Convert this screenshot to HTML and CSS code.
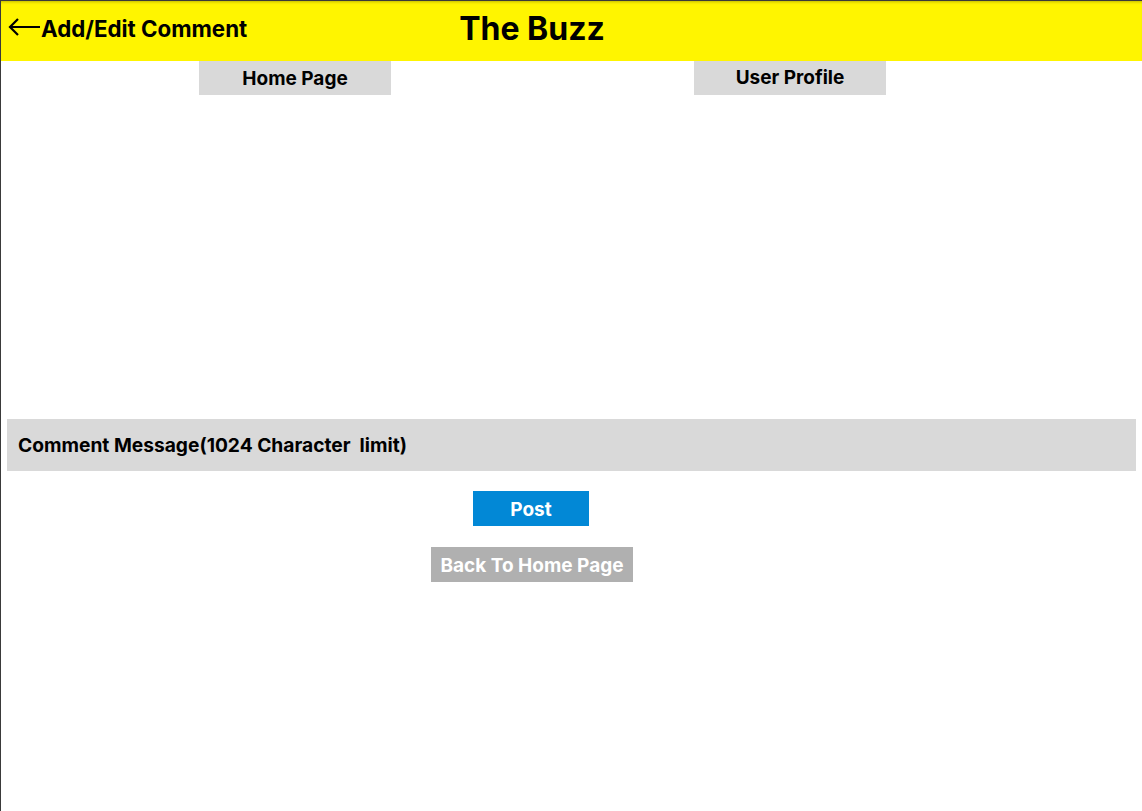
FILE: index.html
```html
<!DOCTYPE html>
<html>
<head>
<meta charset="utf-8">
<link rel="stylesheet" href="styles.css">
</head>
<body>
<div class="frame">
  <header class="topbar">
    <div class="back">
      <svg class="arrow" width="32" height="20" viewBox="0 0 32 20"><path d="M32 10H2M10 2L2 10L10 18" fill="none" stroke="#000" stroke-width="2.2"/></svg>
      <span class="page-title">Add/Edit Comment</span>
    </div>
    <h1 class="brand">The Buzz</h1>
  </header>
  <nav class="nav">
    <a class="nav-btn home">Home Page</a>
    <a class="nav-btn profile">User Profile</a>
  </nav>
  <div class="comment-field">Comment Message(1024 Character&nbsp; limit)</div>
  <div class="actions">
    <button class="btn post">Post</button>
    <button class="btn back-home">Back To Home Page</button>
  </div>
</div>
</body>
</html>
```
FILE: styles.css
```css
html, body { margin: 0; padding: 0; background: #fff; }
body { font-family: Inter, "Noto Sans", sans-serif; }
.frame {
  width: 1141px;
  height: 810px;
  border-left: 1px solid #3a3a3a;
  border-top: 1px solid #3a3a3a;
}
.topbar {
  height: 60px;
  box-sizing: border-box;
  background: #fff500;
  display: flex;
  align-items: center;
  padding: 0 0 6px 7px;
  box-shadow: inset 0 3px 3px -2px rgba(0,0,0,0.25);
}
.back { display: flex; align-items: center; }
.arrow { display: block; margin-top: -2px; }
.page-title { font-size: 22.3px; font-weight: 700; color: #000; margin-left: 1px; }
.brand { margin: 0 0 0 212px; font-size: 32px; font-weight: 700; color: #000; }
.nav { display: flex; padding-left: 198px; gap: 303px; }
.nav-btn {
  width: 192px; height: 34px; background: #d9d9d9;
  display: flex; align-items: center; justify-content: center;
  font-size: 19px; font-weight: 700; color: #000;
}
.nav-btn.profile { padding-bottom: 2px; box-sizing: border-box; }
.comment-field {
  margin: 324px 0 0 6px;
  width: 1129px; height: 52px; background: #d9d9d9;
  display: flex; align-items: center; box-sizing: border-box; padding-left: 11px;
  font-size: 19.2px; font-weight: 700; color: #000;
}
.actions {
  width: 1062px;
  display: flex; flex-direction: column; align-items: center;
  gap: 21px; margin-top: 20px;
}
.btn {
  border: 0; font-family: inherit; font-size: 19px; font-weight: 700; color: #fff;
  height: 35px; padding: 2px 0 0; display: flex; align-items: center; justify-content: center;
}
.post { width: 116px; background: #0288d6; margin-left: -2px; }
.back-home { width: 202px; background: #b0b0b0; }
```
